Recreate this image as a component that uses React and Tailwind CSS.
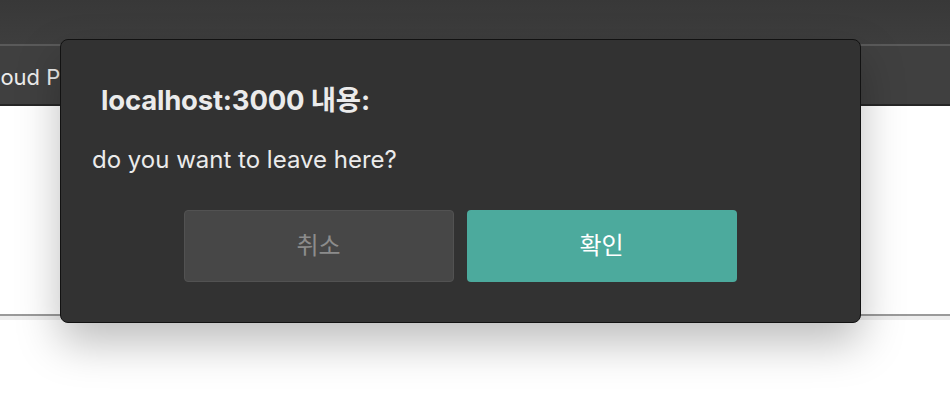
import React from "react";

function App() {
  return (
    <div className="relative w-[950px] h-[402px] overflow-hidden bg-white font-['Inter','Noto_Sans_CJK_KR',sans-serif]">
      <div className="h-[44px] bg-gradient-to-b from-[#383838] to-[#3e3e3e]" />
      <div className="h-[62px] bg-[#404040] border-t-2 border-t-[#5a5a5a] border-b-2 border-b-[#262626] flex items-center overflow-hidden">
        <span className="-ml-[21px] pt-[4px] text-[22px] text-[#ececec] whitespace-nowrap">Cloud Platform</span>
      </div>
      <div className="h-[208px]" />
      <div className="h-[2px] bg-[#9a9a9a]" />
      <div className="h-[4px] bg-[#eeeeee]" />

      <div className="absolute left-[60px] top-[39px] w-[801px] h-[284px] bg-[#323232] rounded-[8px] border border-[#121212] shadow-[0_20px_44px_rgba(0,0,0,0.26)] flex flex-col">
        <div className="pl-[40px] pt-[44px] text-[27.5px] font-bold leading-[32px] tracking-[-0.2px] text-[#ebebeb]">
          localhost:3000 내용:
        </div>
        <div className="pl-[31px] pt-[30px] text-[24px] leading-[28px] text-[#ebebeb]">
          do you want to leave here?
        </div>
        <div className="flex justify-center gap-[13px] pt-[36px] pr-[1px]">
          <button className="w-[270px] h-[72px] rounded-[4px] bg-[#474747] border border-[#525252] text-[24px] text-[#8c8c8c]">
            취소
          </button>
          <button className="w-[270px] h-[72px] rounded-[4px] bg-[#4caa9d] text-[24px] text-white">
            확인
          </button>
        </div>
      </div>
    </div>
  );
}

export default App;
